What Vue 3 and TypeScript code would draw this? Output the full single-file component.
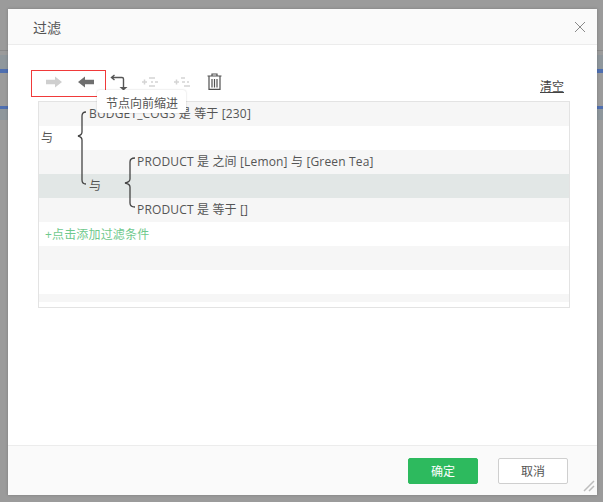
<script setup lang="ts">
interface Row {
  text: string
  indent: number
  tone: 'odd' | 'even' | 'active'
  add?: boolean
  short?: boolean
}

const rows: Row[] = [
  { text: 'BUDGET_COGS 是 等于 [230]', indent: 50, tone: 'odd' },
  { text: '与', indent: 2, tone: 'even' },
  { text: 'PRODUCT 是 之间 [Lemon] 与 [Green Tea]', indent: 98, tone: 'odd' },
  { text: '与', indent: 50, tone: 'active' },
  { text: 'PRODUCT 是 等于 []', indent: 98, tone: 'odd' },
  { text: '+点击添加过滤条件', indent: 6, tone: 'even', add: true },
  { text: '', indent: 0, tone: 'odd' },
  { text: '', indent: 0, tone: 'even' },
  { text: '', indent: 0, tone: 'odd', short: true },
]
</script>

<template>
  <div class="page">
    <div class="strip strip-left" />
    <div class="strip strip-right" />
    <div class="dialog">
      <header class="head">
        <span class="title">过滤</span>
        <svg class="close" width="12" height="12" viewBox="0 0 12 12">
          <path d="M1 1l10 10M11 1L1 11" stroke="#8a8a8a" fill="none" />
        </svg>
      </header>

      <main class="body">
        <div class="toolbar">
          <div class="marked">
            <svg width="16" height="12" viewBox="0 0 16 12">
              <path d="M0 3.800h9V0.500L16 6l-7 5.500V8.200H0z" fill="#cfcfcf" />
            </svg>
            <svg width="16" height="12" viewBox="0 0 16 12">
              <path d="M16 3.800H7V0.500L0 6l7 5.500V8.200h9z" fill="#6f6f6f" />
            </svg>
          </div>
          <svg class="tool swap" width="18" height="18" viewBox="0 0 18 18">
            <path d="M4.500 1L1.500 3.500 4.500 6M2 3.500h10q1.500 0 1.500 1.500v10" stroke="#555" stroke-width="1.400" fill="none" />
            <path d="M9.500 13h8l-4 3.500z" fill="#555" />
          </svg>
          <svg class="tool plus-a" width="18" height="12" viewBox="0 0 18 12">
            <path d="M1 6h5M3.500 3.500v5M8 2h6M10 6h2M8 10h6M14 6h3" stroke="#d4d4d4" stroke-width="1.500" fill="none" />
          </svg>
          <svg class="tool plus-b" width="18" height="12" viewBox="0 0 18 12">
            <path d="M1 6h5M3.500 3.500v5M8 2h4M9 6h3M11 10h6M14 6h2" stroke="#d4d4d4" stroke-width="1.500" fill="none" />
          </svg>
          <svg class="tool trash" width="15" height="17" viewBox="0 0 15 17">
            <path d="M0.500 3h14M5 3V1h5v2M2 3.500V16.400h11V3.500M5 6v8.500M7.500 6v8.500M10 6v8.500" stroke="#505050" stroke-width="1.200" fill="none" />
          </svg>
          <a class="clear">清空</a>
        </div>

        <div class="tree">
          <div
            v-for="(row, i) in rows"
            :key="i"
            class="row"
            :class="[row.tone, { short: row.short }]"
            :style="{ paddingLeft: row.indent + 'px' }"
          >
            <span :class="{ add: row.add }">{{ row.text }}</span>
          </div>
          <svg class="brace brace-outer" width="14" height="74" viewBox="0 0 14 74">
            <path d="M11 1Q7 1 7 5V21Q7 24 3 25Q7 26 7 29V69Q7 73 11 73" stroke="#444" stroke-width="1.300" fill="none" />
          </svg>
          <svg class="brace brace-inner" width="14" height="52" viewBox="0 0 14 52">
            <path d="M12 1Q7 1 7 5V22Q7 25 2 26Q7 27 7 30V46Q7 50 12 50" stroke="#444" stroke-width="1.300" fill="none" />
          </svg>
        </div>

        <div class="tip">节点向前缩进</div>
      </main>

      <footer class="foot">
        <button class="btn primary">确定</button>
        <button class="btn">取消</button>
        <svg class="grip" width="12" height="12" viewBox="0 0 12 12">
          <path d="M1 11L11 1M6 11l5-5" stroke="#bdbdbd" stroke-width="1.500" fill="none" />
        </svg>
      </footer>
    </div>
  </div>
</template>

<style scoped>
.page {
  position: relative;
  width: 603px;
  height: 502px;
  padding: 9px 6px 7px 8px;
  box-sizing: border-box;
  overflow: hidden;
  background: #9b9b9b;
  font-family: "Open Sans", "Noto Sans CJK SC", sans-serif;
  font-size: 12px;
  color: #555;
}

.strip {
  position: absolute;
  top: 50px;
  width: 8px;
  height: 70px;
  background: linear-gradient(
    #8a8a8a 0 1px,
    #9b9b9b 1px 5px,
    #8f979c 5px 19px,
    #4f6fb0 19px 23px,
    #9b9b9b 23px 56px,
    #4f6fb0 56px 59px,
    #8f979c 59px
  );
}

.strip-left {
  left: 0;
}

.strip-right {
  right: 0;
  width: 6px;
}

.dialog {
  position: relative;
  display: flex;
  flex-direction: column;
  height: 100%;
  background: #fff;
  box-shadow: 0 0 3px rgba(0, 0, 0, 0.2);
}

.head {
  display: flex;
  align-items: center;
  justify-content: space-between;
  height: 36px;
  padding: 0 11px 0 25px;
  border-bottom: 1px solid #ececec;
  background: #fafafa;
  box-sizing: border-box;
}

.title {
  font-size: 14px;
  color: #555;
}

.body {
  position: relative;
  flex: 1;
  padding: 25px 27px 0 30px;
}

.toolbar {
  display: flex;
  align-items: flex-start;
  height: 31px;
  margin-left: -7px;
}

.marked {
  display: flex;
  align-items: center;
  gap: 16px;
  box-sizing: border-box;
  width: 75px;
  height: 27px;
  padding: 0 0 4px 14px;
  border: 1px solid #f03a3a;
}

.tool {
  margin-top: 6px;
}

.swap {
  margin: 4px 0 0 4px;
}

.plus-a {
  margin-left: 13px;
}

.plus-b {
  margin-left: 14px;
}

.trash {
  margin: 3px 0 0 16px;
}

.clear {
  margin: 7px 6px 0 auto;
  font-size: 12px;
  color: #444;
  text-decoration: underline;
}

.tree {
  position: relative;
  box-sizing: border-box;
  height: 207px;
  overflow: hidden;
  border: 1px solid #e3e3e3;
}

.row {
  display: flex;
  align-items: center;
  height: 24px;
  line-height: 24px;
  letter-spacing: 0.16px;
}

.row.short {
  height: 8px;
}

.odd {
  background: #f6f6f6;
}

.even {
  background: #fff;
}

.active {
  background: #e2e7e6;
}

.add {
  position: relative;
  top: 1px;
  color: #6fc98d;
}

.brace {
  position: absolute;
}

.brace-outer {
  left: 36px;
  top: 9px;
}

.brace-inner {
  left: 84px;
  top: 55px;
}

.tip {
  position: absolute;
  left: 89px;
  top: 45px;
  box-sizing: border-box;
  height: 23px;
  padding: 0 8px 0 9px;
  line-height: 27px;
  background: #fff;
  border-radius: 3px;
  box-shadow: 0 0 2px rgba(0, 0, 0, 0.2);
  white-space: nowrap;
}

.foot {
  position: relative;
  display: flex;
  align-items: center;
  justify-content: flex-end;
  gap: 20px;
  height: 50px;
  padding-right: 29px;
  border-top: 1px solid #ececec;
  background: #fafafa;
  box-sizing: border-box;
}

.btn {
  width: 70px;
  height: 26px;
  padding: 0;
  border: 1px solid #cfcfcf;
  border-radius: 2px;
  background: #fff;
  font: inherit;
  color: #555;
}

.primary {
  border-color: #2dba5e;
  background: #2dba5e;
  color: #fff;
}

.grip {
  position: absolute;
  right: 2px;
  bottom: 3px;
}
</style>
